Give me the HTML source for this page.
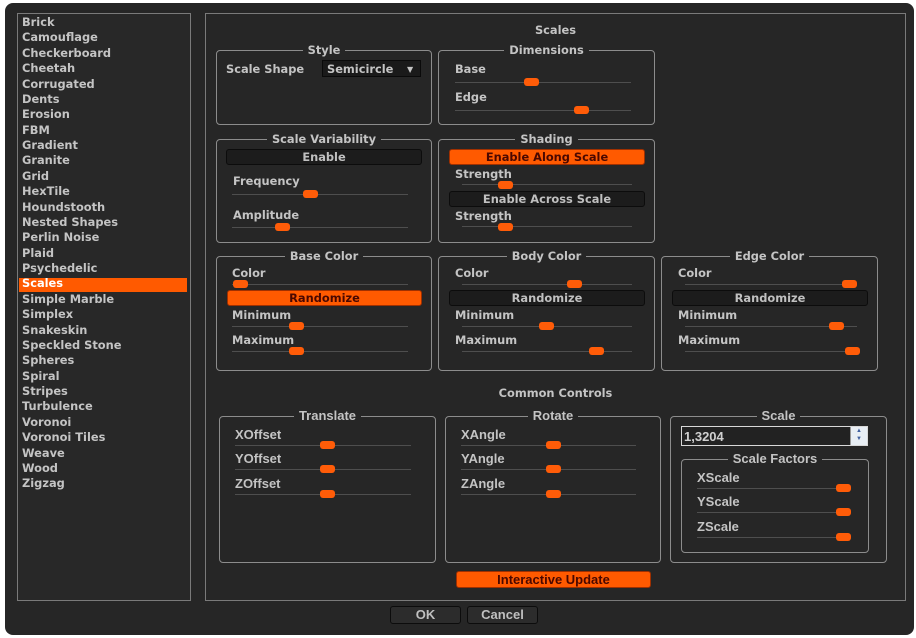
<!DOCTYPE html><html><head><style>
*{margin:0;padding:0;box-sizing:border-box}
body{width:916px;height:638px;background:#fff;position:relative;overflow:hidden;font-family:"DejaVu Sans",Verdana,sans-serif;font-weight:bold;font-size:11.4px;color:#c4c4c4}
.a{position:absolute}
#win{left:5px;top:3px;width:909px;height:632px;background:#262626;border-radius:8px}
.pan{border:1px solid #7a7a7a;background:#282828}
.box{position:absolute;border:1px solid #8c8c8c;border-radius:4px}
.lg{position:absolute;top:-8px;left:0;right:0;text-align:center;line-height:14px}
.lg span{background:#262626;padding:0 5px}
.t{position:absolute;white-space:nowrap;line-height:13px}
.tr{position:absolute;height:1px;background:#4e4e4e}
.h{position:absolute;width:15px;height:8px;background:#ff5c08;border-radius:3px}
.btn{position:absolute;height:16px;border:1px solid #0c0c0c;background:#1c1c1c;border-radius:3px;text-align:center;line-height:14px;color:#c0c0c0}
.or{background:#ff5a00;color:#4a0800;border-color:#a03000}
.n{font-family:"Liberation Sans",sans-serif;font-size:13px}
</style></head><body>
<div class="a" id="win"></div>
<div class="a pan" style="left:17px;top:13px;width:174px;height:588px"></div>
<div class="a" style="left:19px;top:278px;width:168px;height:14px;background:#ff5a00"></div>
<div class="a" style="left:22px;top:15px;line-height:15.37px">Brick<br>Camouflage<br>Checkerboard<br>Cheetah<br>Corrugated<br>Dents<br>Erosion<br>FBM<br>Gradient<br>Granite<br>Grid<br>HexTile<br>Houndstooth<br>Nested Shapes<br>Perlin Noise<br>Plaid<br>Psychedelic<br><span style="color:#fff">Scales</span><br>Simple Marble<br>Simplex<br>Snakeskin<br>Speckled Stone<br>Spheres<br>Spiral<br>Stripes<br>Turbulence<br>Voronoi<br>Voronoi Tiles<br>Weave<br>Wood<br>Zigzag</div>
<div class="a pan" style="left:205px;top:13px;width:701px;height:588px;background:#262626"></div>
<div class="t" style="left:205px;width:701px;text-align:center;top:24px">Scales</div>

<div class="box" style="left:216px;top:50px;width:216px;height:75px"><div class="lg"><span>Style</span></div></div>
<div class="t" style="left:226px;top:63px">Scale Shape</div>
<div class="a" style="left:322px;top:60px;width:99px;height:17px;background:#1a1a1a;border:1px solid #0a0a0a"></div>
<div class="t" style="left:327px;top:63px">Semicircle</div><div class="t" style="left:407px;top:63px;font-size:8px">▼</div>

<div class="box" style="left:438px;top:50px;width:217px;height:75px"><div class="lg"><span>Dimensions</span></div></div>
<div class="t" style="left:455px;top:63px">Base</div><div class="tr" style="left:455px;top:82px;width:176px"></div><div class="h" style="left:524px;top:78px"></div>
<div class="t" style="left:455px;top:91px">Edge</div><div class="tr" style="left:455px;top:110px;width:176px"></div><div class="h" style="left:574px;top:106px"></div>

<div class="box" style="left:216px;top:139px;width:216px;height:104px"><div class="lg"><span>Scale Variability</span></div></div>
<div class="btn" style="left:226px;top:149px;width:196px">Enable</div>
<div class="t" style="left:233px;top:175px">Frequency</div><div class="tr" style="left:232px;top:194px;width:176px"></div><div class="h" style="left:303px;top:190px"></div>
<div class="t" style="left:233px;top:209px">Amplitude</div><div class="tr" style="left:232px;top:227px;width:176px"></div><div class="h" style="left:275px;top:223px"></div>

<div class="box" style="left:438px;top:139px;width:217px;height:104px"><div class="lg"><span>Shading</span></div></div>
<div class="btn or" style="left:449px;top:149px;width:196px">Enable Along Scale</div>
<div class="t" style="left:455px;top:168px">Strength</div><div class="tr" style="left:462px;top:184px;width:170px"></div><div class="h" style="left:498px;top:181px"></div>
<div class="btn" style="left:449px;top:191px;width:196px">Enable Across Scale</div>
<div class="t" style="left:455px;top:210px">Strength</div><div class="tr" style="left:462px;top:226px;width:170px"></div><div class="h" style="left:498px;top:223px"></div>

<div class="box" style="left:216px;top:256px;width:216px;height:115px"><div class="lg"><span>Base Color</span></div></div>
<div class="t" style="left:232px;top:267px">Color</div><div class="tr" style="left:232px;top:284px;width:176px"></div><div class="h" style="left:233px;top:280px"></div>
<div class="btn or" style="left:227px;top:290px;width:195px">Randomize</div>
<div class="t" style="left:232px;top:309px">Minimum</div><div class="tr" style="left:232px;top:326px;width:176px"></div><div class="h" style="left:289px;top:322px"></div>
<div class="t" style="left:232px;top:334px">Maximum</div><div class="tr" style="left:232px;top:351px;width:176px"></div><div class="h" style="left:289px;top:347px"></div>

<div class="box" style="left:438px;top:256px;width:217px;height:115px"><div class="lg"><span>Body Color</span></div></div>
<div class="t" style="left:455px;top:267px">Color</div><div class="tr" style="left:462px;top:284px;width:170px"></div><div class="h" style="left:567px;top:280px"></div>
<div class="btn" style="left:449px;top:290px;width:196px">Randomize</div>
<div class="t" style="left:455px;top:309px">Minimum</div><div class="tr" style="left:462px;top:326px;width:170px"></div><div class="h" style="left:539px;top:322px"></div>
<div class="t" style="left:455px;top:334px">Maximum</div><div class="tr" style="left:462px;top:351px;width:170px"></div><div class="h" style="left:589px;top:347px"></div>

<div class="box" style="left:661px;top:256px;width:217px;height:115px"><div class="lg"><span>Edge Color</span></div></div>
<div class="t" style="left:678px;top:267px">Color</div><div class="tr" style="left:685px;top:284px;width:172px"></div><div class="h" style="left:842px;top:280px"></div>
<div class="btn" style="left:672px;top:290px;width:196px">Randomize</div>
<div class="t" style="left:678px;top:309px">Minimum</div><div class="tr" style="left:685px;top:326px;width:172px"></div><div class="h" style="left:829px;top:322px"></div>
<div class="t" style="left:678px;top:334px">Maximum</div><div class="tr" style="left:685px;top:351px;width:172px"></div><div class="h" style="left:845px;top:347px"></div>

<div class="t" style="left:205px;width:701px;text-align:center;top:387px">Common Controls</div>

<div class="n">
<div class="box" style="left:219px;top:416px;width:217px;height:147px"><div class="lg"><span>Translate</span></div></div>
<div class="t" style="left:235px;top:428px">XOffset</div><div class="tr" style="left:235px;top:445px;width:176px"></div><div class="h" style="left:320px;top:441px"></div>
<div class="t" style="left:235px;top:452px">YOffset</div><div class="tr" style="left:235px;top:469px;width:176px"></div><div class="h" style="left:320px;top:465px"></div>
<div class="t" style="left:235px;top:477px">ZOffset</div><div class="tr" style="left:235px;top:494px;width:176px"></div><div class="h" style="left:320px;top:490px"></div>

<div class="box" style="left:445px;top:416px;width:216px;height:147px"><div class="lg"><span>Rotate</span></div></div>
<div class="t" style="left:461px;top:428px">XAngle</div><div class="tr" style="left:461px;top:445px;width:175px"></div><div class="h" style="left:546px;top:441px"></div>
<div class="t" style="left:461px;top:452px">YAngle</div><div class="tr" style="left:461px;top:469px;width:175px"></div><div class="h" style="left:546px;top:465px"></div>
<div class="t" style="left:461px;top:477px">ZAngle</div><div class="tr" style="left:461px;top:494px;width:175px"></div><div class="h" style="left:546px;top:490px"></div>

<div class="box" style="left:670px;top:416px;width:217px;height:147px"><div class="lg"><span>Scale</span></div></div>
<div class="a" style="left:681px;top:426px;width:187px;height:20px;border:1px solid #d8d8d8;background:#222"></div>
<div class="t" style="left:684px;top:430px;color:#d0d0d0">1,3204</div>
<div class="a" style="left:850px;top:427px;width:17px;height:18px;background:#e8eef4;border-left:1px solid #999;font-size:6px;color:#4060a0;text-align:center;line-height:8px">▲<br>▼</div>
<div class="box" style="left:681px;top:459px;width:188px;height:94px"><div class="lg"><span>Scale Factors</span></div></div>
<div class="t" style="left:697px;top:471px">XScale</div><div class="tr" style="left:697px;top:488px;width:154px"></div><div class="h" style="left:836px;top:484px"></div>
<div class="t" style="left:697px;top:495px">YScale</div><div class="tr" style="left:697px;top:512px;width:154px"></div><div class="h" style="left:836px;top:508px"></div>
<div class="t" style="left:697px;top:520px">ZScale</div><div class="tr" style="left:697px;top:537px;width:154px"></div><div class="h" style="left:836px;top:533px"></div>

<div class="btn or" style="left:456px;top:571px;width:195px;height:17px;line-height:15px">Interactive Update</div>
<div class="btn" style="left:390px;top:606px;width:71px;height:18px;line-height:16px;background:#2c2c2c">OK</div>
<div class="btn" style="left:467px;top:606px;width:71px;height:18px;line-height:16px;background:#2c2c2c">Cancel</div>
</div>
</body></html>
